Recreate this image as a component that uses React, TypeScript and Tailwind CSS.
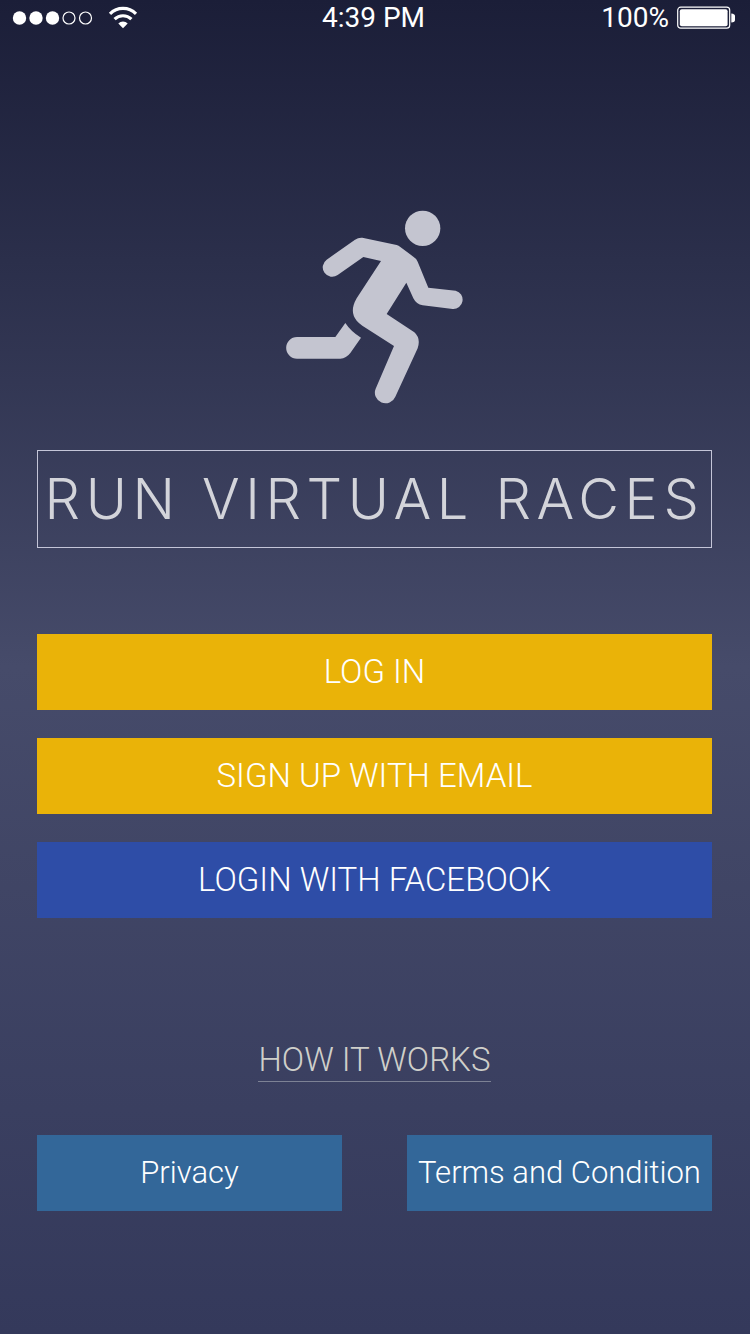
import type { ButtonHTMLAttributes } from "react";

function StatusBar() {
  return (
    <header className="grid h-9 grid-cols-3 items-center pr-[15px] pl-3 font-['Roboto',sans-serif] text-[28px] leading-9 text-white">
      <svg viewBox="0 0 126 24" className="h-6 w-[126px]" role="img" aria-label="Signal strength and Wi-Fi">
        <g fill="currentColor">
          <circle cx="7.5" cy="12" r="6.7" />
          <circle cx="24" cy="12" r="6.7" />
          <circle cx="40.5" cy="12" r="6.7" />
        </g>
        <g fill="none" stroke="currentColor" strokeWidth="1.2">
          <circle cx="57" cy="12" r="6" />
          <circle cx="73.5" cy="12" r="6" />
        </g>
        <g fill="none" stroke="currentColor" strokeWidth="3.2">
          <path d="M98 7.8a18.5 18.5 0 0 1 26 0" />
          <path d="M102.6 13.2a12 12 0 0 1 16.8 0" />
        </g>
        <path d="M106.3 17.5a6.5 6.5 0 0 1 9.4 0L111 22.3z" fill="currentColor" />
      </svg>
      <time className="text-center whitespace-nowrap">4:39 PM</time>
      <div className="flex items-center justify-end gap-2">
        <span>100%</span>
        <svg viewBox="0 0 58 24" className="h-6 w-[58px]" role="img" aria-label="Battery full">
          <rect x="0.7" y="1.2" width="52" height="21" rx="3" fill="none" stroke="currentColor" strokeWidth="1.2" />
          <rect x="2.8" y="3.2" width="47.8" height="17" rx="2" fill="currentColor" />
          <path d="M54.3 7.5a4.4 4.4 0 0 1 0 9z" fill="currentColor" />
        </svg>
      </div>
    </header>
  );
}

function Runner() {
  return (
    <svg viewBox="33 30 534 582" className="h-[194px] w-[178px] text-[#c4c5d0]" fill="currentColor" role="img" aria-label="Runner">
      <circle cx="443" cy="85" r="53" />
      <path d="M365 135 262 113Q250 112 240 119L155 179A28 28 0 0 0 188 225L265 171 318 183 245 295Q222 335 245 362 252 370 262 377L357 438 302 566A31 31 0 0 0 361 590L428 445Q438 415 418 397L335 342 394 248 415 295Q424 313 443 316L533 327A28 28 0 0 0 542 272L460 263 428 185Q424 175 415 170L376 141Q371 137 365 135Z" />
      <path d="M211 369Q228 395 258 413L226 459Q214 475 196 476H66A32.5 32.5 0 0 1 66 411H181Z" />
    </svg>
  );
}

type Tone = "gold" | "facebook" | "steel";

const tones: Record<Tone, string> = {
  gold: "bg-[#eab308] text-[33px]",
  facebook: "bg-[#2e4da7] text-[33px]",
  steel: "bg-[#336799] text-[31px]",
};

function ActionButton({ tone, ...rest }: { tone: Tone } & ButtonHTMLAttributes<HTMLButtonElement>) {
  return (
    <button
      type="button"
      className={`flex h-19 w-full items-center justify-center leading-10 font-light whitespace-nowrap text-white ${tones[tone]}`}
      {...rest}
    />
  );
}

export default function App() {
  return (
    <div className="flex min-h-screen flex-col bg-linear-to-b from-[#1b1e38] via-[#464b6a] to-[#34395b] font-['Roboto','Liberation_Sans',sans-serif]">
      <StatusBar />
      <main className="flex flex-col pt-[174px] pr-[38px] pb-10 pl-[37px]">
        <div className="flex justify-center">
          <Runner />
        </div>
        <h1 className="mt-[46px] flex h-[98px] items-center justify-center border border-[#c4c5d8] font-['Inter',sans-serif] text-[56px] leading-none font-light tracking-widest whitespace-nowrap text-[#d3d4da]">
          RUN VIRTUAL RACES
        </h1>
        <div className="mt-[86px] flex flex-col gap-7">
          <ActionButton tone="gold">LOG IN</ActionButton>
          <ActionButton tone="gold">SIGN UP WITH EMAIL</ActionButton>
          <ActionButton tone="facebook">LOGIN WITH FACEBOOK</ActionButton>
        </div>
        <a
          href="#how-it-works"
          className="mt-[120px] self-center border-b border-[#7d8295] text-[33px] leading-[43px] font-light text-[#cfcfca]"
        >
          HOW IT WORKS
        </a>
        <div className="mt-[53px] grid grid-cols-2 gap-[65px]">
          <ActionButton tone="steel">Privacy</ActionButton>
          <ActionButton tone="steel">Terms and Condition</ActionButton>
        </div>
      </main>
    </div>
  );
}
